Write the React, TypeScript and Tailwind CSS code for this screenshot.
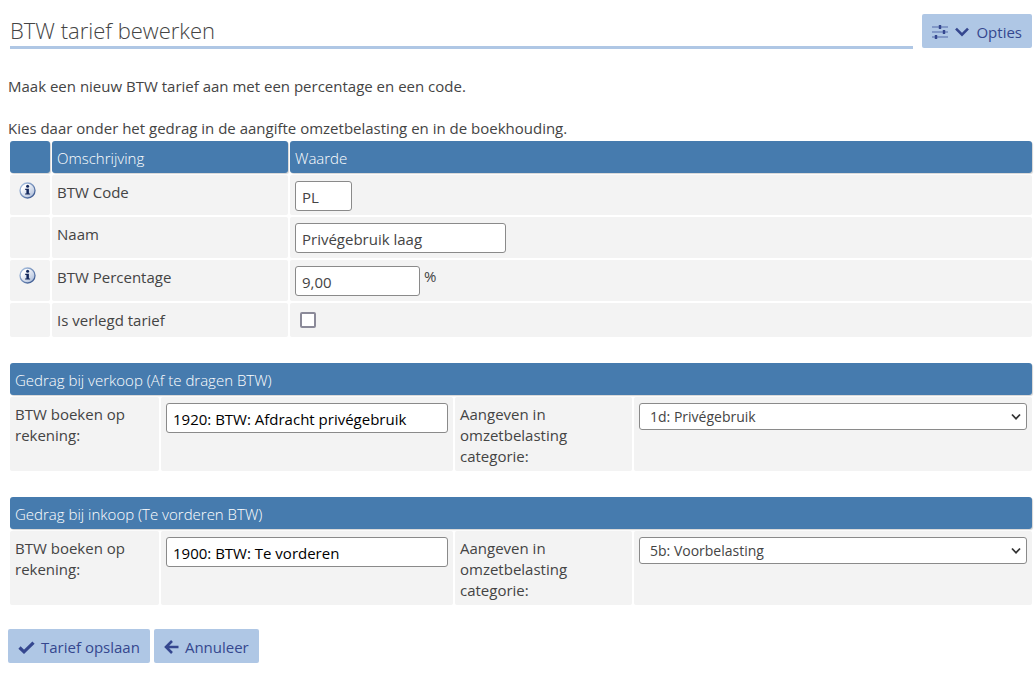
import { useId, useState } from "react";

const headCell =
  "h-8 rounded-[3px] bg-[#467bae] px-[5px] pt-0.5 text-left align-middle font-light text-white shadow-[1px_1px_1px_#d5d5d5]";
const cell = "rounded-[2px] bg-[#f3f3f3] px-[5px] pt-[7px] align-top";
const fieldCell = "rounded-[2px] bg-[#f3f3f3] px-[5px] pt-1.5 align-top";
const field =
  "block h-[30px] rounded-[3px] border border-[#8a8a8a] bg-white px-1.5 pt-0.5 leading-5 outline-none";
const button =
  "flex h-[34px] shrink-0 items-center rounded-[2px] bg-[#afc7e5] px-2.5 pt-0.5 text-[#35478f]";

const verkoopOptions = ["1a: Hoog tarief", "1b: Laag tarief", "1d: Privégebruik"];
const inkoopOptions = ["5b: Voorbelasting", "Geen"];

const InfoIcon = () => (
  <svg width="17" height="17" viewBox="0 0 17 17" role="img" aria-label="Info">
    <defs>
      <linearGradient id="infoFill" x1="0" y1="0" x2="1" y2="1">
        <stop offset="0.25" stopColor="#ffffff" />
        <stop offset="1" stopColor="#9fb2d4" />
      </linearGradient>
      <linearGradient id="infoRing" x1="0" y1="0" x2="1" y2="1">
        <stop offset="0" stopColor="#b4cbe8" />
        <stop offset="0.6" stopColor="#6883b1" />
        <stop offset="1" stopColor="#2d4b85" />
      </linearGradient>
    </defs>
    <circle cx="8.5" cy="8.5" r="7.5" fill="url(#infoFill)" stroke="url(#infoRing)" strokeWidth="1.3" />
    <circle cx="8.6" cy="4.3" r="1.5" fill="#14295c" />
    <path d="M6.2 6.7h3.7v4.7h1.2v1.2H6.1v-1.2h1.3V7.9H6.2z" fill="#14295c" />
  </svg>
);

const SlidersIcon = () => (
  <svg width="16" height="14" viewBox="0 0 16 14" aria-hidden="true">
    <path d="M0 2h16M0 7h16M0 12h16" stroke="#7389bd" strokeWidth="1.6" />
    <path d="M8 0v4M12 5v4M4 10v4" stroke="#35478f" strokeWidth="2.4" />
  </svg>
);

const ChevronIcon = () => (
  <svg width="14" height="10" viewBox="0 0 14 10" aria-hidden="true">
    <path d="M1 1.6 7 7.6 13 1.6" fill="none" stroke="#35478f" strokeWidth="2.6" />
  </svg>
);

const CheckIcon = () => (
  <svg width="17" height="13" viewBox="0 0 17 13" aria-hidden="true">
    <path d="M1.5 6.5 6 10.8 15.5 1.6" fill="none" stroke="#35478f" strokeWidth="3.2" />
  </svg>
);

const ArrowIcon = () => (
  <svg width="15" height="14" viewBox="0 0 15 14" aria-hidden="true">
    <path d="M8 1 2 7l6 6M2.2 7H14.5" fill="none" stroke="#35478f" strokeWidth="2.6" />
  </svg>
);

type GedragProps = {
  title: string;
  rekening: string;
  options: string[];
  categorie: string;
};

const GedragTable = ({ title, rekening, options, categorie }: GedragProps) => {
  const id = useId();

  return (
    <table className="w-full table-fixed border-separate border-spacing-0.5">
      <colgroup>
        <col className="w-[149px]" />
        <col className="w-[292px]" />
        <col className="w-[177px]" />
        <col />
      </colgroup>
      <thead>
        <tr>
          <th colSpan={4} className={headCell}>
            {title}
          </th>
        </tr>
      </thead>
      <tbody>
        <tr>
          <td className={`${cell} h-[74px]`}>
            <label htmlFor={`${id}-rekening`}>BTW boeken op rekening:</label>
          </td>
          <td className={fieldCell}>
            <input
              id={`${id}-rekening`}
              type="text"
              defaultValue={rekening}
              className={`${field} w-full text-black`}
            />
          </td>
          <td className={cell}>
            <label htmlFor={`${id}-categorie`}>Aangeven in omzetbelasting categorie:</label>
          </td>
          <td className={fieldCell}>
            <div className="relative">
              <select
                id={`${id}-categorie`}
                defaultValue={categorie}
                className="block h-[27px] w-full appearance-none rounded-[3px] border border-[#8a8a8a] bg-white pr-6 pl-2.5 text-[14px] outline-none"
              >
                {options.map((option) => (
                  <option key={option}>{option}</option>
                ))}
              </select>
              <svg
                className="pointer-events-none absolute top-2.5 right-1.5"
                width="10"
                height="8"
                viewBox="0 0 10 8"
                aria-hidden="true"
              >
                <path d="M1 1.5 5 5.8 9 1.5" fill="none" stroke="#333" strokeWidth="1.8" />
              </svg>
            </div>
          </td>
        </tr>
      </tbody>
    </table>
  );
};

const App = () => {
  const [verlegd, setVerlegd] = useState(false);

  return (
    <main className="pl-2 font-['Open_Sans','Noto_Sans',sans-serif] text-[15px] leading-[21px] text-[#444]">
      <header className="flex items-start gap-[9px] pt-3.5 pr-0.5 pl-0.5">
        <h1 className="h-[35px] flex-1 border-b-3 border-[#afc7e5] text-[22px] leading-8 font-light text-[#444]">
          BTW tarief bewerken
        </h1>
        <button type="button" className={`${button} gap-[7px]`}>
          <SlidersIcon />
          <ChevronIcon />
          Opties
        </button>
      </header>

      <p className="mt-[27px]">Maak een nieuw BTW tarief aan met een percentage en een code.</p>
      <p className="mt-[21px]">
        Kies daar onder het gedrag in de aangifte omzetbelasting en in de boekhouding.
      </p>

      <form onSubmit={(e) => e.preventDefault()}>
        <table className="w-full table-fixed border-separate border-spacing-0.5">
          <colgroup>
            <col className="w-10" />
            <col className="w-[236px]" />
            <col />
          </colgroup>
          <thead>
            <tr>
              <th className={headCell}></th>
              <th className={headCell}>Omschrijving</th>
              <th className={headCell}>Waarde</th>
            </tr>
          </thead>
          <tbody>
            <tr>
              <td className={`${cell} h-10 pl-[9px]`}>
                <InfoIcon />
              </td>
              <td className={cell}>
                <label htmlFor="code">BTW Code</label>
              </td>
              <td className={fieldCell}>
                <input id="code" type="text" defaultValue="PL" className={`${field} w-[57px]`} />
              </td>
            </tr>
            <tr>
              <td className={`${cell} h-[41px]`}></td>
              <td className={cell}>
                <label htmlFor="naam">Naam</label>
              </td>
              <td className={fieldCell}>
                <input
                  id="naam"
                  type="text"
                  defaultValue="Privégebruik laag"
                  className={`${field} w-[211px]`}
                />
              </td>
            </tr>
            <tr>
              <td className={`${cell} h-[41px] pl-[9px]`}>
                <InfoIcon />
              </td>
              <td className={cell}>
                <label htmlFor="percentage">BTW Percentage</label>
              </td>
              <td className={fieldCell}>
                <div className="flex items-start gap-1">
                  <input
                    id="percentage"
                    type="text"
                    defaultValue="9,00"
                    className={`${field} w-[125px]`}
                  />
                  <span>%</span>
                </div>
              </td>
            </tr>
            <tr>
              <td className={`${cell} h-[34px]`}></td>
              <td className={cell}>
                <label htmlFor="verlegd">Is verlegd tarief</label>
              </td>
              <td className={`${cell} pl-2.5`}>
                <input
                  id="verlegd"
                  type="checkbox"
                  checked={verlegd}
                  onChange={(e) => setVerlegd(e.target.checked)}
                  className="mt-0.5 block size-4 appearance-none rounded-[2px] border-2 border-[#8b8a99] bg-white checked:bg-[#467bae]"
                />
              </td>
            </tr>
          </tbody>
        </table>

        <div className="mt-[22px] space-y-[22px]">
          <GedragTable
            title="Gedrag bij verkoop (Af te dragen BTW)"
            rekening="1920: BTW: Afdracht privégebruik"
            options={verkoopOptions}
            categorie="1d: Privégebruik"
          />
          <GedragTable
            title="Gedrag bij inkoop (Te vorderen BTW)"
            rekening="1900: BTW: Te vorderen"
            options={inkoopOptions}
            categorie="5b: Voorbelasting"
          />
        </div>

        <div className="mt-[22px] flex gap-1">
          <button type="submit" className={`${button} gap-1.5`}>
            <CheckIcon />
            Tarief opslaan
          </button>
          <button type="button" className={`${button} gap-1.5`}>
            <ArrowIcon />
            Annuleer
          </button>
        </div>
      </form>
    </main>
  );
};

export default App;
